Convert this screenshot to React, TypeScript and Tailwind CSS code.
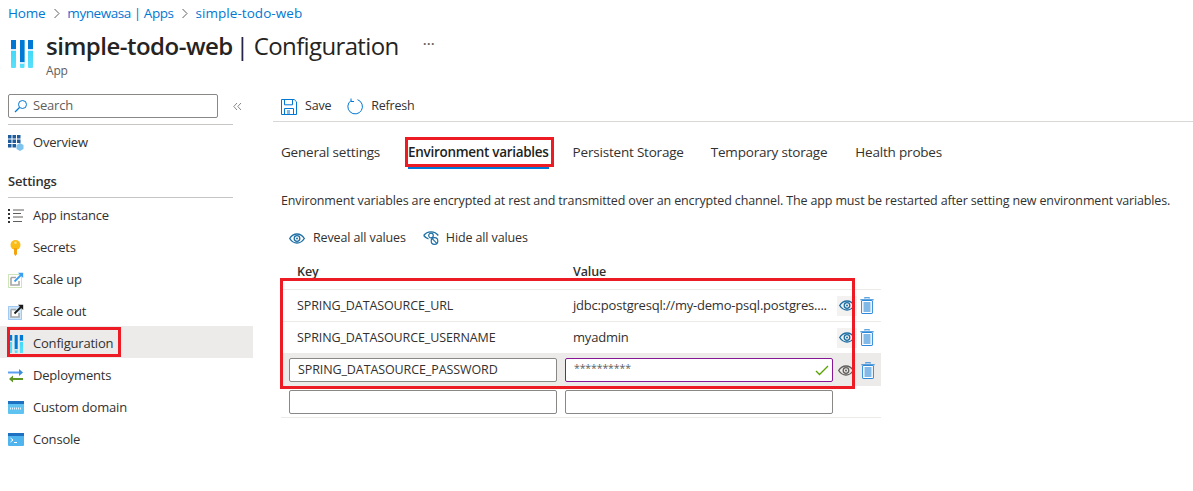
import React from "react";

const navRow = "flex items-center h-8 pl-2 pt-[4px] gap-[9px] text-[13px] text-[#323130]";

const PaneIcon = ({ w = 22, h = 28, id }: { w?: number; h?: number; id: string }) => (
  <svg width={w} height={h} viewBox="0 0 22 28">
    <defs>
      <linearGradient id={id} x1="0" y1="0" x2="0" y2="1">
        <stop offset="0" stopColor="#32d4f5" />
        <stop offset="1" stopColor="#5ae0fb" />
      </linearGradient>
    </defs>
    <rect x="0" y="0" width="5" height="28" rx="1" fill={`url(#${id})`} />
    <rect x="9" y="0" width="4.500" height="28" rx="1" fill={`url(#${id})`} />
    <rect x="17" y="0" width="5" height="28" rx="1" fill={`url(#${id})`} />
    <rect x="0" y="0" width="5" height="9" fill="#0078d4" />
    <rect x="9" y="0" width="4.500" height="22" fill="#0078d4" />
    <rect x="17" y="0" width="5" height="9" fill="#0078d4" />
    <rect x="0" y="9" width="5" height="2" fill="#d6eefb" />
    <rect x="9" y="22" width="4.500" height="2" fill="#d6eefb" />
    <rect x="17" y="9" width="5" height="2" fill="#d6eefb" />
  </svg>
);

const Chevron = () => (
  <svg width="9" height="11" viewBox="0 0 9 11" className="mx-[6.5px]">
    <path d="M2.500 1l4.500 4.500L2.500 10" fill="none" stroke="#605e5c" strokeWidth="1" />
  </svg>
);

const EyeIcon = ({ color = "#1d6fa5" }: { color?: string }) => (
  <svg width="16" height="11" viewBox="0 0 16 11">
    <path d="M.7 5.500C2.500 2.600 5 1 8 1s5.500 1.600 7.300 4.500C13.500 8.400 11 10 8 10S2.500 8.400.7 5.500z" fill="none" stroke={color} strokeWidth="1.400" />
    <circle cx="8" cy="5.500" r="2.800" fill="none" stroke={color} strokeWidth="1.300" />
    <circle cx="8" cy="5.500" r="1" fill={color} />
  </svg>
);

const TrashIcon = () => (
  <svg width="14" height="17" viewBox="0 0 14 17">
    <path d="M4.800 1.500V.7h4.400v.8M.3 2.700h13.400" stroke="#2b88d8" strokeWidth="1.100" fill="none" />
    <rect x="1.600" y="3.500" width="10.800" height="13" rx=".5" fill="#fff" stroke="#2b88d8" strokeWidth="1" />
    <rect x="3.500" y="5" width="7" height="10" fill="#83b9e6" />
  </svg>
);

const OverviewIcon = () => (
  <svg width="16" height="16" viewBox="0 0 16 16">
    <g fill="#1e5c9c">
      <rect x="0" y="0" width="3.500" height="3.500" />
      <rect x="4.500" y="0" width="3.500" height="3.500" />
      <rect x="9" y="0" width="3.500" height="3.500" />
      <rect x="0" y="4.500" width="3.500" height="3.500" />
      <rect x="4.500" y="4.500" width="3.500" height="3.500" />
      <rect x="9" y="4.500" width="3.500" height="3.500" />
      <rect x="0" y="9" width="3.500" height="3.500" />
      <rect x="4.500" y="9" width="3.500" height="3.500" />
    </g>
    <path d="M12 8l3.500 2v4L12 16l-3.500-2v-4z" fill="#7fc4ee" />
  </svg>
);

const ListIcon = () => (
  <svg width="16" height="14" viewBox="0 0 16 14">
    <g fill="#323130">
      <rect x="0" y="0" width="2" height="2" />
      <rect x="0" y="4" width="2" height="2" />
      <rect x="0" y="8" width="2" height="2" />
      <rect x="0" y="12" width="2" height="2" />
    </g>
    <path d="M5 1h11M5 4.500h8M5 8h10M5 12.500h9" stroke="#605e5c" strokeWidth="1" />
  </svg>
);

const KeyIcon = () => (
  <svg width="16" height="16" viewBox="0 0 16 16">
    <circle cx="7.500" cy="5" r="5" fill="#fcbc17" />
    <path d="M6 8h3v6l-1.500 2L6 14z" fill="#f2a20c" />
    <circle cx="7.500" cy="2.800" r="1.300" fill="#fde08a" />
  </svg>
);

const ScaleIcon = ({ edge, arrow, fill }: { edge: string; arrow: string; fill: string }) => (
  <svg width="16" height="16" viewBox="0 0 16 16">
    <rect x=".5" y="2.500" width="13" height="13" fill={fill} stroke={edge} strokeWidth="1" strokeDasharray="1 1" />
    <path d="M3 5.500h5M3 5.500v7.500h8V9" fill="#fff" stroke="#a6a6a6" strokeWidth="1.600" />
    <path d="M6.500 9.500L13 3" stroke={arrow} strokeWidth="1.800" />
    <path d="M10 .8h5.200V6z" fill={arrow} />
  </svg>
);

const DeployIcon = () => (
  <svg width="16" height="16" viewBox="0 0 16 16">
    <path d="M0 4.500h13" stroke="#5ea0ef" strokeWidth="2" />
    <path d="M11 1l4 3.500L11 8z" fill="#3b8edb" />
    <path d="M15 11h-12" stroke="#5e9624" strokeWidth="2" />
    <path d="M5 7.500L1 11l4 3.500z" fill="#5e9624" />
  </svg>
);

const DomainIcon = () => (
  <svg width="16" height="14" viewBox="0 0 16 14">
    <rect x="0" y="0" width="16" height="13" rx="1" fill="#5ec3f0" />
    <rect x="0" y="0" width="16" height="3" fill="#1e70c1" />
    <path d="M2 7.500h12" stroke="#e4f3fc" strokeWidth="2" strokeDasharray="1 1" />
  </svg>
);

const ConsoleIcon = () => (
  <svg width="16" height="14" viewBox="0 0 16 14">
    <rect x="0" y="0" width="16" height="13" rx="1" fill="#50b4ee" />
    <rect x="0" y="0" width="16" height="3" fill="#1e70c1" />
    <path d="M2.500 5l2.500 2-2.500 2" fill="none" stroke="#fff" strokeWidth="1" />
    <path d="M6 9.500h3" stroke="#fff" strokeWidth="1" />
  </svg>
);

const SaveIcon = () => (
  <svg width="16" height="16" viewBox="0 0 16 16">
    <path d="M.5.500h12.700l2.300 2.300v12.700H.5z" fill="none" stroke="#0078d4" strokeWidth="1" />
    <path d="M3.500.8v5h8v-5M3.500 15V9.500h9V15" fill="none" stroke="#0078d4" strokeWidth="1" />
    <rect x="6" y="11" width="3" height="4" fill="#83b9e6" />
  </svg>
);

const RefreshIcon = () => (
  <svg width="17" height="17" viewBox="0 0 17 17">
    <path d="M10.500 1.700a7.300 7.300 0 1 1-6.500.9" fill="none" stroke="#0078d4" strokeWidth="1" />
    <path d="M4 .5v3h3" fill="none" stroke="#0078d4" strokeWidth="1" />
  </svg>
);

const HideIcon = () => (
  <svg width="16" height="14" viewBox="0 0 16 14">
    <path d="M.7 4.500C2.500 2 5 .8 8 .8s5.500 1.200 7.300 3.700" fill="none" stroke="#1d6fa5" strokeWidth="1.300" />
    <path d="M.7 4.500C2 6.200 3.500 7.300 5.500 7.800" fill="none" stroke="#1d6fa5" strokeWidth="1.300" />
    <circle cx="8" cy="4.500" r="2.300" fill="none" stroke="#1d6fa5" strokeWidth="1.200" />
    <circle cx="11.500" cy="10" r="3.300" fill="#fff" stroke="#1d6fa5" strokeWidth="1.200" />
    <path d="M9.200 7.700l4.600 4.600" stroke="#1d6fa5" strokeWidth="1.200" />
  </svg>
);

const rows = [
  { key: "SPRING_DATASOURCE_URL", value: "jdbc:postgresql://my-demo-psql.postgres...." },
  { key: "SPRING_DATASOURCE_USERNAME", value: "myadmin" },
];

const App = () => {
  return (
    <div className="relative flex flex-col w-[1193px] h-[491px] bg-white overflow-hidden font-['Open_Sans',sans-serif] tracking-[-0.2px] text-[#323130]">
      {/* Breadcrumb */}
      <div className="flex items-center h-[26px] pl-2 text-[13.5px] text-[#0078d4]">
        <span>Home</span>
        <Chevron />
        <span className="tracking-[-0.45px]">mynewasa | Apps</span>
        <Chevron />
        <span className="tracking-[0.05px]">simple-todo-web</span>
      </div>

      {/* Title */}
      <div className="flex items-start h-[55px] pl-[11px] pt-[3px]">
        <div className="pt-[11px] pr-[13px]">
          <PaneIcon id="titleGrad" />
        </div>
        <div className="flex flex-col">
          <div className="flex items-center h-[34px] text-[24px] text-[#252423] tracking-[-0.5px]">
            <span className="font-semibold">simple-todo-web</span>
            <span className="ml-[3px] font-normal tracking-[-0.65px]">| Configuration</span>
            <span className="ml-[24px] mb-1 text-[17px] text-[#605e5c]">···</span>
          </div>
          <span className="text-[12px] leading-[16px] text-[#605e5c]">App</span>
        </div>
      </div>

      <div className="flex flex-1">
        {/* Sidebar */}
        <aside className="flex flex-col w-[253px] shrink-0">
          <div className="flex items-center h-[36px] pt-[8px] box-content -mt-[1px]">
            <div className="flex items-center ml-2 w-[210px] h-6 pl-[5px] gap-[5px] border border-[#8a8886] rounded-[2px] text-[13px] text-[#605e5c]">
              <svg width="14" height="14" viewBox="0 0 14 14">
                <circle cx="8.500" cy="5.500" r="4" fill="none" stroke="#0078d4" strokeWidth="1" />
                <path d="M5.500 8.500L1 13" stroke="#0078d4" strokeWidth="1.200" />
              </svg>
              <span>Search</span>
            </div>
            <svg width="9" height="9" viewBox="0 0 9 9" className="ml-[15px]">
              <path d="M4 1L.8 4.500 4 8M8 1L4.800 4.500 8 8" fill="none" stroke="#8a8886" strokeWidth="1" />
            </svg>
          </div>
          <div className="ml-2 w-[225px] h-px bg-[#c8c6c4]" />
          <div className={navRow}>
            <OverviewIcon />
            Overview
          </div>
          <div className="flex items-end h-[34px] pl-2 text-[13px] font-semibold">Settings</div>
          <div className="ml-2 mt-[6px] w-[225px] h-px bg-[#c8c6c4]" />
          <div className={navRow}>
            <ListIcon />
            App instance
          </div>
          <div className={navRow}>
            <KeyIcon />
            Secrets
          </div>
          <div className={navRow}>
            <ScaleIcon edge="#9ccb74" arrow="#3b9ef0" fill="#fff" />
            Scale up
          </div>
          <div className={navRow}>
            <ScaleIcon edge="#5ea0ef" arrow="#1b1a19" fill="#cde6f8" />
            Scale out
          </div>
          <div className={navRow + " bg-[#edebe9]"}>
            <PaneIcon w={16} h={18} id="navGrad" />
            Configuration
          </div>
          <div className={navRow}>
            <DeployIcon />
            Deployments
          </div>
          <div className={navRow}>
            <DomainIcon />
            Custom domain
          </div>
          <div className={navRow}>
            <ConsoleIcon />
            Console
          </div>
        </aside>

        {/* Main */}
        <main className="flex flex-col flex-1 pl-5 text-[12.5px]">
          <div className="flex items-center h-[41px] pt-[11px] pl-2 border-b border-[#d9d7d5]">
            <SaveIcon />
            <span className="ml-[8px]">Save</span>
            <span className="ml-[16px]"><RefreshIcon /></span>
            <span className="ml-[7px]">Refresh</span>
          </div>

          <div className="flex h-[46px] mt-[6px] pl-2 text-[13.5px]">
            <span className="flex items-center pt-[2px]">General settings</span>
            <span className="flex items-center ml-[28px] pt-[9px] h-[41px] border-b-2 border-[#0078d4] font-semibold text-[#201f1e] tracking-[-0.3px]">Environment variables</span>
            <span className="flex items-center pt-[2px] ml-[24px]">Persistent Storage</span>
            <span className="flex items-center pt-[2px] ml-[27px]">Temporary storage</span>
            <span className="flex items-center pt-[2px] ml-[28px]">Health probes</span>
          </div>

          <p className="pl-2 mt-[17px] leading-[20px] tracking-[-0.14px]">
            Environment variables are encrypted at rest and transmitted over an encrypted channel. The app must be restarted after setting new environment variables.
          </p>

          <div className="flex items-center h-[34px] mt-[10px] pl-4 tracking-[-0.12px]">
            <EyeIcon />
            <span className="ml-2">Reveal all values</span>
            <span className="ml-[17px]"><HideIcon /></span>
            <span className="ml-[7px]">Hide all values</span>
          </div>

          <div className="flex flex-col ml-2 w-[600px] tracking-[-0.1px]">
            <div className="grid grid-cols-[276px_276px] h-[26px] mt-[9px] border-b border-[#edebe9] font-semibold">
              <span className="pl-4 leading-[16px]">Key</span>
              <span className="pl-4 leading-[16px]">Value</span>
            </div>
            {rows.map((row) => (
              <div key={row.key} className="flex items-center h-8 border-b border-[#edebe9]">
                <span className="w-[292px] pl-4 pt-[2px]">{row.key}</span>
                <span className="w-[264px] text-[13px] tracking-[-0.2px]">{row.value}</span>
                <span className="flex items-center justify-center w-5 h-5 bg-[#f3f2f1]"><EyeIcon /></span>
                <span className="ml-[3px]"><TrashIcon /></span>
              </div>
            ))}
            <div className="flex items-center h-8 pl-2 gap-2 bg-[#edebe9]">
              <div className="flex items-center shrink-0 w-[268px] h-6 pl-2 bg-white border border-[#8a8886] rounded-[2px]">
                SPRING_DATASOURCE_PASSWORD
              </div>
              <div className="flex items-center justify-between shrink-0 w-[268px] h-6 pl-2 pr-[3px] bg-white border border-[#881798] rounded-[2px]">
                <span className="text-[10.500px] text-[#605e5c] mb-[2px]">**********</span>
                <svg width="14" height="11" viewBox="0 0 14 11">
                  <path d="M1 6l3.500 3.500L13 1" fill="none" stroke="#57a300" strokeWidth="1.300" />
                </svg>
              </div>
              <span className="-ml-[3px]"><EyeIcon color="#605e5c" /></span>
              <span className="-ml-[1px]"><TrashIcon /></span>
            </div>
            <div className="flex items-center h-8 px-2 gap-2 border-b border-[#edebe9]">
              <div className="w-[268px] h-6 bg-white border border-[#8a8886] rounded-[2px]" />
              <div className="w-[268px] h-6 bg-white border border-[#8a8886] rounded-[2px]" />
            </div>
          </div>
        </main>
      </div>

      {/* Red annotation boxes drawn on top of the screenshot */}
      <div className="absolute left-[7px] top-[327px] w-[114px] h-[30px] border-[3px] border-[#ed1c24]" />
      <div className="absolute left-[405px] top-[137px] w-[149px] h-[30px] border-[3px] border-[#ed1c24]" />
      <div className="absolute left-[280px] top-[278px] w-[575px] h-[111px] border-[3px] border-[#ed1c24]" />
    </div>
  );
};

export default App;
